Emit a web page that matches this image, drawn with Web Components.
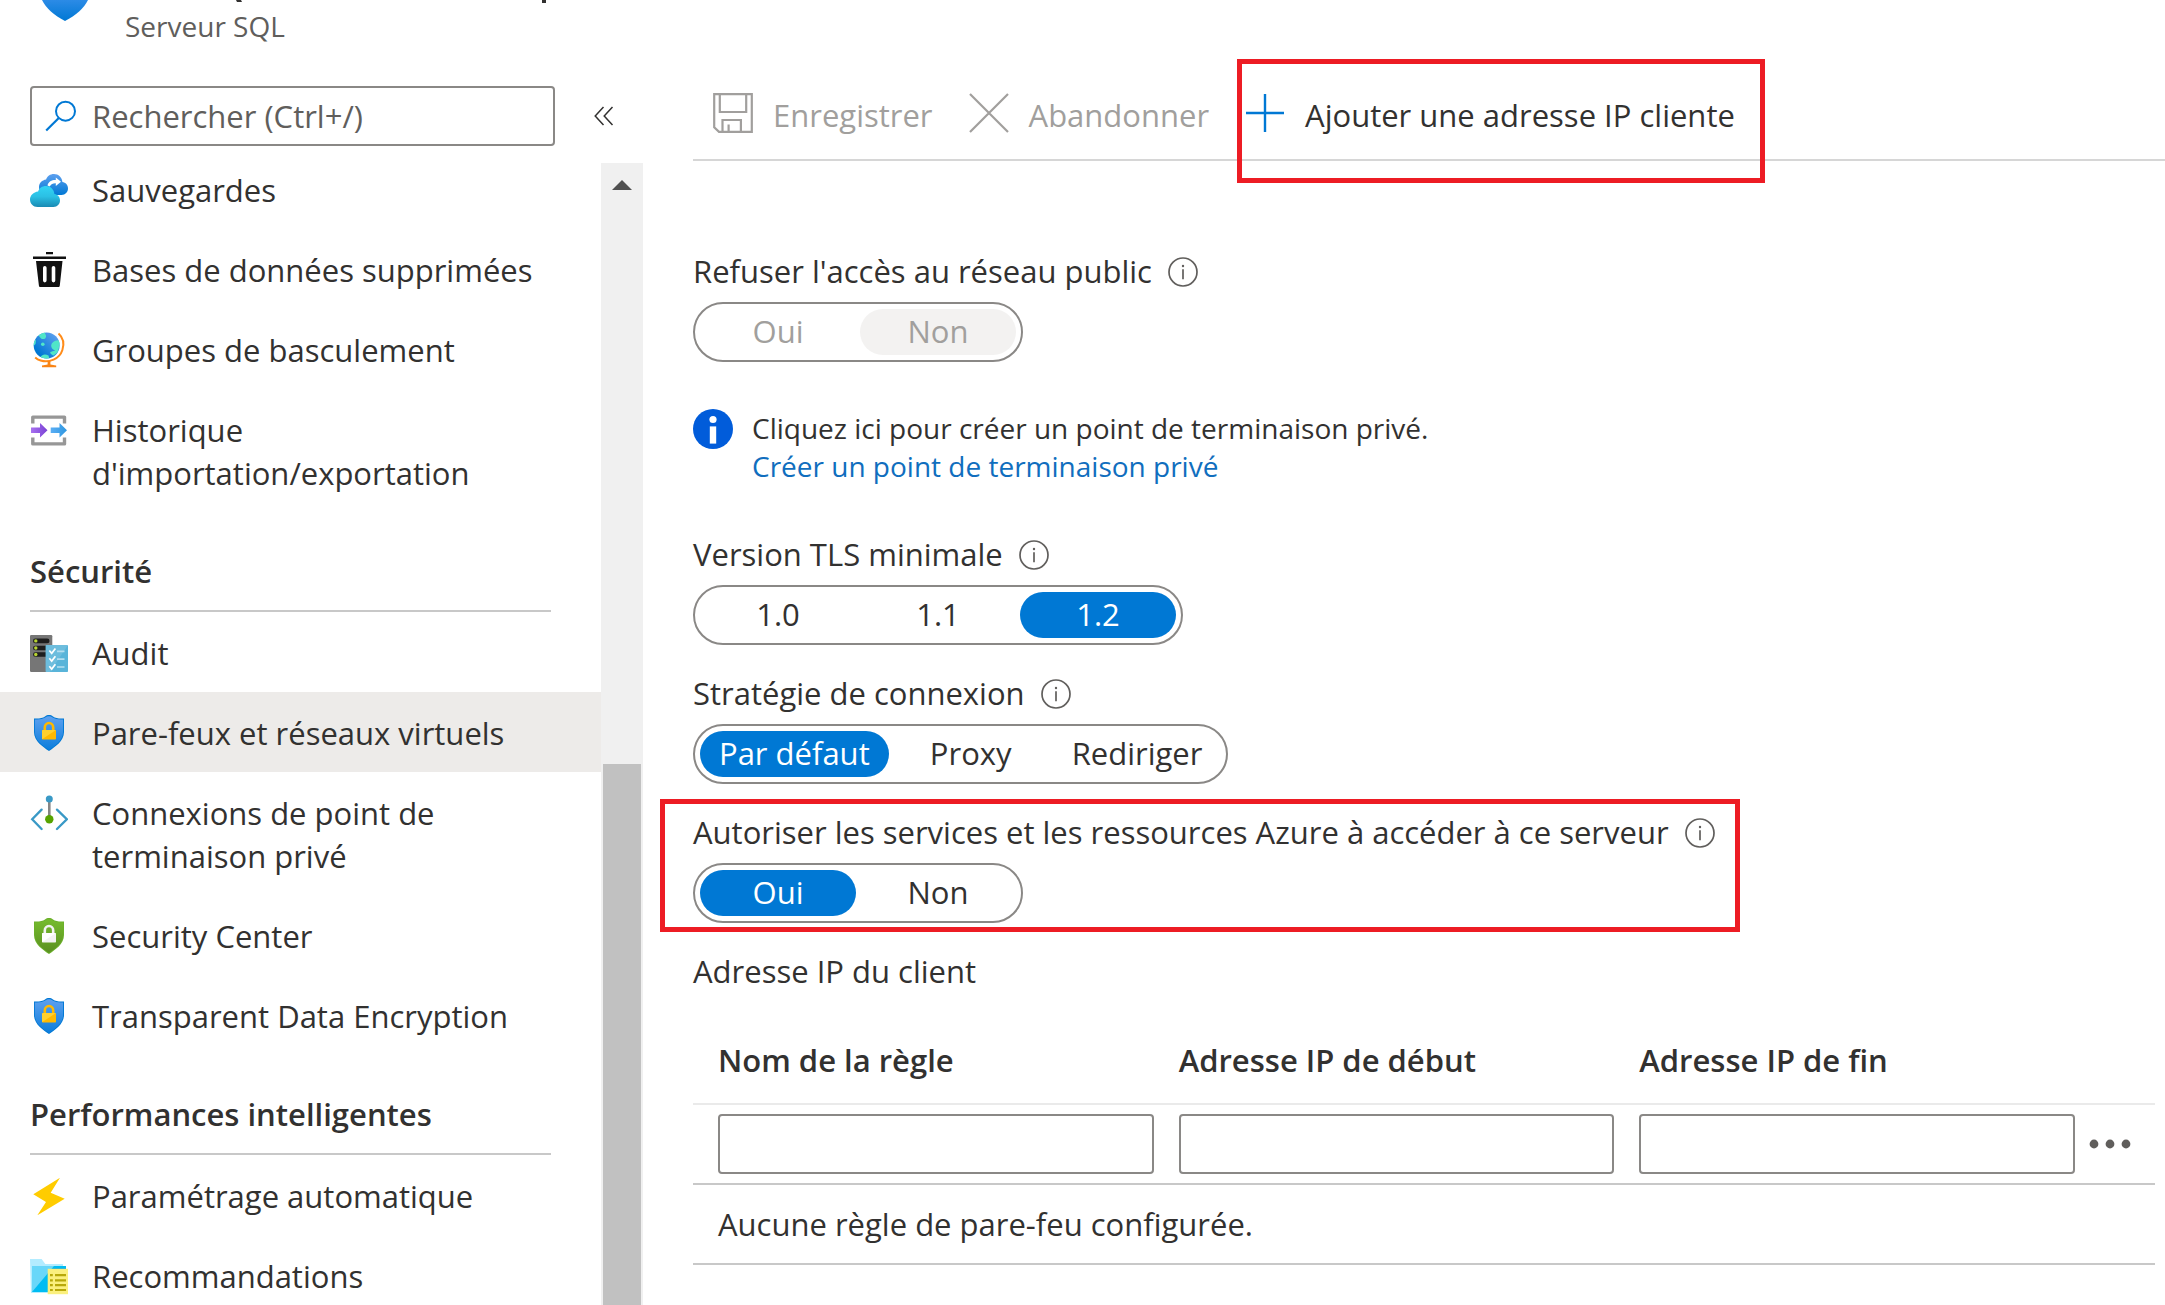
<!DOCTYPE html>
<html lang="fr">
<head>
<meta charset="utf-8">
<title>Pare-feux et réseaux virtuels</title>
<style>
  html, body { margin: 0; height: 100%; overflow: hidden; background: #fff; }
  body {
    font-family: "Open Sans", "Noto Sans", sans-serif;
    font-size: 31px;
    line-height: 43px;
    color: #323130;
  }
</style>
</head>
<body>
<sql-portal></sql-portal>

<script>
const SHIELD = 'M19 1c1.600 0 2.600.4 4 1.500C25.500 4.200 29 4.800 34 4.500V18c0 9-9 15-15 19C13 33 4 27 4 18V4.500c5 .3 8.500-.3 11-2C16.400 1.400 17.400 1 19 1z';
const shield = (id, top, bottom, edge, lock, lock2) => `
  <defs><linearGradient id="${id}" x1="0" y1="0" x2="0" y2="1"><stop offset="0" stop-color="${top}"/><stop offset="1" stop-color="${bottom}"/></linearGradient></defs>
  <path d="${SHIELD}" fill="${edge}"/>
  <path d="${SHIELD}" fill="url(#${id})" transform="translate(1.100 1.200) scale(.94)"/>
  <path d="M14.800 17v-3.500a4.200 4.500 0 0 1 8.400 0V17" fill="none" stroke="${lock}" stroke-width="2.600"/>
  <rect x="12" y="16" width="14" height="9.500" rx=".8" fill="${lock}"/>
  <path d="M12 25.200V16.500l.5-.5H26z" fill="${lock2}"/>`;

const ICONS = {
  backup: ['0 0 38 38', `
    <defs>
      <linearGradient id="b1" x1="0" y1="0" x2="0" y2="1"><stop offset="0" stop-color="#5ea0ef"/><stop offset="1" stop-color="#0078d4"/></linearGradient>
      <linearGradient id="b2" x1="0" y1="0" x2="0" y2="1"><stop offset="0" stop-color="#32d4f5"/><stop offset=".5" stop-color="#2bc0e4"/><stop offset="1" stop-color="#198ab3"/></linearGradient>
    </defs>
    <path d="M38 17.500c0-3.400-2.400-5.900-5.600-6.400C32 6.200 28.500 3 24 3c-4 0-6.800 2.200-7.900 5.400C12 9 9 12 9 16c0 4.600 3.300 8 7.500 8H31.500c3.800 0 6.500-3 6.500-6.500z" fill="url(#b1)"/>
    <path d="M17.500 14.500c1-4 4.500-5.600 8.300-5.400V6.400L31 10.700l-5.200 4.300v-2.800c-2.500-.1-4.800.3-6 3.300z" fill="#fff"/>
    <path d="M30 29.500c0-3.400-2.400-6-5.600-6.400C24 18.200 20.500 15 16 15c-4 0-6.800 2.200-7.900 5.400C3.500 21 0 24.300 0 28.500 0 32.800 3.300 36 7.500 36h16c3.800 0 6.500-3 6.500-6.500z" fill="url(#b2)"/>`],
  trash: ['0 0 38 38', `
    <path d="M16 1h7v2.200h-7zM3 5.600h33V8H3z" fill="#111"/>
    <path d="M6 10h26.500l-2.700 24.500c-.1 1-.7 1.500-1.600 1.500H10.500c-.9 0-1.500-.5-1.600-1.500z" fill="#111"/>
    <path d="M14.800 16.800v12.800M23.500 16.800v12.800" stroke="#fff" stroke-width="3.600" stroke-linecap="round"/>`],
  globe: ['0 0 38 38', `
    <defs><linearGradient id="g1" x1="1" y1="0" x2="0" y2="1"><stop offset=".1" stop-color="#5ea0ef"/><stop offset=".8" stop-color="#0078d4"/></linearGradient>
    <clipPath id="gc"><circle cx="16.700" cy="14.500" r="13"/></clipPath></defs>
    <circle cx="16.700" cy="14.500" r="13" fill="url(#g1)"/>
    <g clip-path="url(#gc)" fill="#50e6c8">
      <path d="M8 3.500L14 0l2 4.500c.4 2.500-1.600 4-3.600 3.500-1.700-.2-2-1.500-2.700-2z"/>
      <circle cx="12.800" cy="13.200" r="1.800"/>
      <path d="M3 10l3-1-.5 4L3 15.500z"/>
      <path d="M31 9.500c-4-.6-7 .3-9.200 3-1.700 3 .2 6.500 3.500 7-2 .7-3.800 1-5 1.500-.4 2 1.800 2.700 3.200 3.500l4-3z"/>
      <path d="M10.500 26c1.500-2.500 4.500-3.200 8-1.500l1 3.500h-8z"/>
    </g>
    <path d="M28.500 2.500C33 6.500 34.300 13 32.400 19 29.500 28.200 19 32 10.600 29.500 8.500 28.900 6.700 27.900 5.200 26.500" fill="none" stroke="#ff8c1a" stroke-width="2"/>
    <path d="M17.600 30h2.800v3.600c2 .2 3.400.7 5.800.9v1.700H12v-1.700c2.400-.2 3.600-.7 5.600-.9z" fill="#f98414"/>`],
  transfer: ['0 0 38 38', `
    <defs>
      <linearGradient id="t1"><stop offset="0" stop-color="#a770f0"/><stop offset="1" stop-color="#7a42d4"/></linearGradient>
      <linearGradient id="t2"><stop offset="0" stop-color="#5aaef5"/><stop offset="1" stop-color="#2f97e0"/></linearGradient>
    </defs>
    <path d="M2.800 12.500V6.100H34.500v6.400M2.800 26.500v6.400H34.500v-6.400" fill="none" stroke="#979797" stroke-width="3.400" stroke-linejoin="round"/>
    <path d="M1 16.500h9V12l7.500 7.300L10 26.500v-4.400H1z" fill="url(#t1)"/>
    <path d="M20.700 16.500h8.800V12l7.500 7.300-7.500 7.200v-4.400h-8.800z" fill="url(#t2)"/>`],
  audit: ['0 0 38 38', `
    <rect x="0" y="1" width="22.300" height="37" rx="1.200" fill="#767676"/>
    <g fill="#1e1e1e"><rect x="3" y="4.600" width="16.500" height="4.600" rx="2.300"/><rect x="3" y="11.700" width="16.500" height="4.600" rx="2.300"/><rect x="3" y="18.200" width="16.500" height="4.600" rx="2.300"/></g>
    <g fill="#b8d432"><circle cx="5.800" cy="6.900" r="1.700"/><circle cx="5.800" cy="14" r="1.700"/><circle cx="5.800" cy="20.500" r="1.700"/></g>
    <rect x="15.600" y="11" width="22.400" height="27" rx=".8" fill="#59b4d9"/>
    <path d="M15.600 11H38L20 38h-4.400z" fill="#fff" opacity=".12"/>
    <path d="M19.300 16.500l2.400 2.800 3.700-4.800M19.300 24.300l2.400 2.800 3.700-4.800M19.300 32.300l2.400 2.800 3.700-4.800" fill="none" stroke="#fff" stroke-width="1.700"/>
    <path d="M27 17.300h7.500M27 25.100h7.500M27 33h7.500" stroke="#b5def0" stroke-width="1.700"/>`],
  firewall: ['0 0 38 38', shield('s1', '#5ea0ef', '#0b7ddb', '#0078d4', '#ffb900', '#ffd02e')],
  endpoint: ['0 0 38 38', `
    <path d="M19.300 7v16" stroke="#858585" stroke-width="2.600"/>
    <circle cx="19.300" cy="5" r="3.500" fill="#3999c6"/><circle cx="19.300" cy="25.300" r="4.200" fill="#57a300"/>
    <path d="M11.600 15.600L2.200 25.300l9.400 9.700M27 15.600l9.800 9.700L27 35" fill="none" stroke="#3999c6" stroke-width="2.300" stroke-linecap="round"/>`],
  security: ['0 0 38 38', shield('s2', '#76bc2d', '#5a8f22', '#6bb02a', '#f2f2f2', '#fff')],
  bolt: ['0 0 38 38', `<path d="M30 .7l-9.300 15 14 6L7.300 38.300 16 25 3.300 17.300z" fill="#fc0"/>`],
  folder: ['0 0 38 38', `
    <path d="M0 2h11.600l3.700 5H33v29H1z" fill="#b3ecff"/>
    <path d="M2 9h34v26H2z" fill="#69d7f9"/>
    <path d="M2 35L24 9h12v26z" fill="#00bcf2"/><path d="M17.500 17l6.500-6h12v1z" fill="#0fa8e0"/>
    <rect x="17.700" y="11.800" width="20.300" height="25.400" fill="#fbf07e"/>
    <g fill="#b8a90a"><path d="M20 17h2.800v2.200H20zM20 22.200h2.800v2.200H20zM20 27h2.800v2.200H20zM20 31.900h2.800v2.200H20zM25 17h11v2.200H25zM25 22.200h11v2.200H25zM25 27h11v2.200H25zM25 31.900h11v2.200H25z"/></g>`],
  search: ['0 0 32 32', `<circle cx="20.500" cy="11.200" r="9.500" fill="none" stroke="currentColor" stroke-width="2"/><path d="M13.800 18L1.200 30.500" stroke="currentColor" stroke-width="2.200"/>`],
  collapse: ['0 0 20 20', `<path d="M9.500 1L1.200 10l8.300 9M18.500 1l-8.300 9 8.300 9" fill="none" stroke="currentColor" stroke-width="1.500"/>`],
  save: ['0 0 40 40', `
    <g fill="none" stroke="currentColor" stroke-width="2.200"><path d="M1.200 1.200h37.600v37.600H6l-4.800-4.600z"/><path d="M6.800 1.500V19h26.400V1.500"/><path d="M9.500 38.500V27h18.400v11.500M15.600 31.500v7"/></g>`],
  discard: ['0 0 40 40', `<path d="M1 1l38 38M39 1L1 39" stroke="currentColor" stroke-width="2.200"/>`],
  add: ['0 0 40 40', `<path d="M20 1v38M1 20h38" stroke="currentColor" stroke-width="2.400"/>`],
  info: ['0 0 30 30', `<circle cx="15" cy="15" r="14" fill="none" stroke="currentColor" stroke-width="1.700"/><path d="M15 12.200v10" stroke="currentColor" stroke-width="1.700"/><circle cx="15" cy="9" r="1.200" fill="currentColor"/>`],
  notice: ['0 0 40 40', `<circle cx="20" cy="20" r="20" fill="#015cda"/><circle cx="20" cy="10.500" r="3.600" fill="#fff"/><path d="M16.800 17.400h6.400v17.200h-6.400z" fill="#fff"/>`],
  more: ['0 0 42 10', `<g fill="currentColor"><circle cx="5" cy="5" r="4.400"/><circle cx="21" cy="5" r="4.400"/><circle cx="37" cy="5" r="4.400"/></g>`],
  up: ['0 0 20 10', `<path d="M0 10L10 0l10 10z" fill="currentColor"/>`],
  server: ['0 0 46 21', `
    <defs><linearGradient id="h1" x1="0" y1="0" x2="0" y2="1"><stop offset="0" stop-color="#2c8be6"/><stop offset="1" stop-color="#0078d4"/></linearGradient></defs>
    <path d="M0 0h46c-4 8-12 15.500-23 21C12 15.500 4 8 0 0z" fill="url(#h1)"/>`],
  heading: ['0 0 312 4', `<path d="M1 0h5l1 2H2zM307 0h4v3h-4z" fill="#323130"/>`]
};

function define(name, html, setup) {
  const template = document.createElement('template');
  template.innerHTML = html;
  customElements.define(name, class extends HTMLElement {
    constructor() {
      super();
      this.attachShadow({ mode: 'open' }).append(template.content.cloneNode(true));
    }
    connectedCallback() {
      if (setup && !this.ready) { this.ready = true; setup(this, this.shadowRoot); }
    }
  });
}

function iconFor(el) {
  const icon = document.createElement('az-icon');
  icon.setAttribute('name', el.getAttribute('icon'));
  return icon;
}

define('az-icon', `
  <style>:host{display:block;flex:none;width:38px;height:38px} svg{display:block;width:100%;height:100%}</style>
  <svg aria-hidden="true"></svg>`, (el, root) => {
  const [box, body] = ICONS[el.getAttribute('name')];
  const svg = root.querySelector('svg');
  svg.setAttribute('viewBox', box);
  svg.innerHTML = body;
});

/* Red frame drawn over whatever it wraps; --frame sets how far it reaches out. */
define('az-callout', `
  <style>
    :host{display:block;position:relative;width:fit-content}
    i{position:absolute;inset:var(--frame);border:5px solid #ed1c24;pointer-events:none}
  </style>
  <slot></slot><i></i>`);

define('az-nav-item', `
  <style>
    :host{display:block}
    a{display:flex;gap:24px;padding:20px 40px 17px 30px;color:inherit;text-decoration:none}
    a[aria-current]{background:#edebe9}
    az-icon{margin-top:2px}
  </style>
  <a href="#"><span><slot></slot></span></a>`, (el, root) => {
  const link = root.querySelector('a');
  link.prepend(iconFor(el));
  if (el.hasAttribute('active')) link.setAttribute('aria-current', 'page');
});

define('az-nav-section', `
  <style>
    :host{display:block}
    h2{margin:0 50px 0 30px;padding:38px 0 17px;border-bottom:2px solid #c8c8c8;font-size:inherit;font-weight:600}
  </style>
  <h2><slot name="title"></slot></h2><slot></slot>`);

define('az-scrollbar', `
  <style>
    :host{display:flex;flex-direction:column;flex:none;width:42px;background:#f0f0f0;color:#505050}
    az-icon{width:20px;height:10px;margin:17px auto 0}
    div{flex:1;margin:574px 2px 0;background:#c1c1c1}
  </style>
  <az-icon name="up"></az-icon><div></div>`);

define('az-sidebar', `
  <style>
    :host{display:flex;flex-direction:column;flex:none;width:643px;height:100%}
    header{display:flex;height:86px;padding-left:42px;gap:37px;box-sizing:border-box}
    header az-icon{width:46px;height:21px}
    header div{display:flex;flex-direction:column;gap:3px}
    header div az-icon{width:312px;height:4px;margin-left:110px}
    p{margin:0;font-size:28px;line-height:38px;color:#605e5c}
    form{display:flex;align-items:center;gap:39px;padding-left:30px}
    label{display:flex;align-items:center;gap:15px;width:525px;height:60px;padding:0 13px;box-sizing:border-box;border:2px solid #8a8886;border-radius:4px;color:#0078d4}
    label az-icon{width:32px;height:32px}
    input{flex:1;min-width:0;border:0;padding:0;outline:0;font:inherit;background:none}
    input::placeholder{color:#605e5c;opacity:1}
    button{border:0;padding:0;background:none;color:#323130}
    button az-icon{width:20px;height:20px}
    .body{display:flex;flex:1;min-height:0;margin-top:3px}
    nav{flex:1;min-width:0;overflow:hidden}
    az-scrollbar{margin-top:14px}
  </style>
  <header>
    <az-icon name="server"></az-icon>
    <div><az-icon name="heading"></az-icon><p>Serveur SQL</p></div>
  </header>
  <form>
    <label><az-icon name="search"></az-icon><input type="text" aria-label="Rechercher" placeholder="Rechercher (Ctrl+/)"></label>
    <button type="button" aria-label="Réduire le menu"><az-icon name="collapse"></az-icon></button>
  </form>
  <div class="body">
    <nav><slot></slot></nav>
    <az-scrollbar></az-scrollbar>
  </div>`);

define('az-command', `
  <style>
    :host{display:block}
    button{display:flex;align-items:flex-start;gap:20px;border:0;padding:0;background:none;font:inherit;color:#323130}
    button:disabled{color:#a19f9d}
    az-icon{width:40px;height:40px}
    button:enabled az-icon{color:#0078d4}
    span{padding-top:1px}
  </style>
  <button type="button"><span><slot></slot></span></button>`, (el, root) => {
  const button = root.querySelector('button');
  button.prepend(iconFor(el));
  button.disabled = el.hasAttribute('disabled');
});

define('az-toolbar', `
  <style>
    :host{display:flex;align-items:flex-start;gap:36px;height:66px;padding:93px 0 0 20px;border-bottom:2px solid #d6d6d6}
  </style>
  <slot></slot>`);

define('az-choice', `
  <style>
    :host{display:block;width:fit-content}
    fieldset{margin:0;border:0;padding:0;min-width:0}
    legend{display:flex;align-items:center;gap:16px;padding:0;margin-bottom:9px}
    legend az-icon{width:30px;height:30px;color:#605e5c}
    div{display:flex;gap:4px;width:fit-content;padding:5px;border:2px solid #8a8886;border-radius:30px}
    label{position:relative;min-width:156px;height:46px;padding:0 19px;box-sizing:border-box;border-radius:23px;line-height:44px;text-align:center}
    input{position:absolute;inset:0;margin:0;opacity:0}
    label:has(:checked){background:#0078d4;color:#fff}
    fieldset:disabled label{color:#a19f9d}
    fieldset:disabled label:has(:checked){background:#f3f2f1}
  </style>
  <fieldset>
    <legend><slot></slot><az-icon name="info"></az-icon></legend>
    <div></div>
  </fieldset>`, (el, root) => {
  const set = root.querySelector('fieldset');
  set.disabled = el.hasAttribute('disabled');
  for (const text of el.getAttribute('options').split('|')) {
    const label = document.createElement('label');
    const input = document.createElement('input');
    input.type = 'radio';
    input.name = 'choice';
    input.checked = text === el.getAttribute('value');
    label.append(input, text);
    root.querySelector('div').append(label);
  }
});

define('az-notice', `
  <style>
    :host{display:flex;gap:19px;font-size:28px;line-height:38px}
    az-icon{width:40px;height:40px}
    ::slotted(p){margin:0}
    ::slotted(a){color:#106ebe;text-decoration:none}
  </style>
  <az-icon name="notice"></az-icon>
  <div><slot></slot></div>`);

define('az-rules', `
  <style>
    :host{display:block}
    table{width:100%;table-layout:fixed;border-collapse:separate;border-spacing:0}
    th,td{padding:0 0 0 25px;text-align:left;font-weight:400;box-sizing:border-box}
    thead th{height:79px;padding-bottom:9px;border-bottom:2px solid #eaeaea;font-weight:600}
    .more{width:80px;padding-left:14px}
    tbody td{height:80px;border-bottom:2px solid #c8c8c8}
    input{display:block;width:100%;height:60px;box-sizing:border-box;border:2px solid #8a8886;border-radius:4px;padding:0 14px;font:inherit;background:#fff}
    button{display:block;border:0;padding:0;background:none;color:#605e5c}
    button az-icon{width:42px;height:10px}
  </style>
  <table>
    <thead><tr><th id="n">Nom de la règle</th><th id="d">Adresse IP de début</th><th id="f">Adresse IP de fin</th><th class="more"></th></tr></thead>
    <tbody>
      <tr>
        <td><input type="text" aria-labelledby="n"></td>
        <td><input type="text" aria-labelledby="d"></td>
        <td><input type="text" aria-labelledby="f"></td>
        <td class="more"><button type="button" aria-label="Plus d'options"><az-icon name="more"></az-icon></button></td>
      </tr>
      <tr><td colspan="4">Aucune règle de pare-feu configurée.</td></tr>
    </tbody>
  </table>`);

define('sql-portal', `
  <style>
    :host{display:flex;height:100vh;overflow:hidden}
    main{flex:1;min-width:0;padding-left:50px}
    .form{display:flex;flex-direction:column;gap:27px;padding:89px 10px 0 0}
    .add{--frame:-34px -30px -46px -8px}
    .allow{--frame:-12px -25px -9px -33px}
    az-notice{margin:20px 0 21px}
    p{margin:0}
    az-rules{margin-top:6px}
  </style>
  <az-sidebar>
    <az-nav-item icon="backup">Sauvegardes</az-nav-item>
    <az-nav-item icon="trash">Bases de données supprimées</az-nav-item>
    <az-nav-item icon="globe">Groupes de basculement</az-nav-item>
    <az-nav-item icon="transfer">Historique d'importation/exportation</az-nav-item>
    <az-nav-section>
      <span slot="title">Sécurité</span>
      <az-nav-item icon="audit">Audit</az-nav-item>
      <az-nav-item icon="firewall" active>Pare-feux et réseaux virtuels</az-nav-item>
      <az-nav-item icon="endpoint">Connexions de point de terminaison privé</az-nav-item>
      <az-nav-item icon="security">Security Center</az-nav-item>
      <az-nav-item icon="firewall">Transparent Data Encryption</az-nav-item>
    </az-nav-section>
    <az-nav-section>
      <span slot="title">Performances intelligentes</span>
      <az-nav-item icon="bolt">Paramétrage automatique</az-nav-item>
      <az-nav-item icon="folder">Recommandations</az-nav-item>
    </az-nav-section>
  </az-sidebar>
  <main>
    <az-toolbar>
      <az-command icon="save" disabled>Enregistrer</az-command>
      <az-command icon="discard" disabled>Abandonner</az-command>
      <az-callout class="add"><az-command icon="add">Ajouter une adresse IP cliente</az-command></az-callout>
    </az-toolbar>
    <div class="form">
      <az-choice options="Oui|Non" value="Non" disabled>Refuser l'accès au réseau public</az-choice>
      <az-notice>
        <p>Cliquez ici pour créer un point de terminaison privé.</p>
        <a href="#">Créer un point de terminaison privé</a>
      </az-notice>
      <az-choice options="1.0|1.1|1.2" value="1.2">Version TLS minimale</az-choice>
      <az-choice options="Par défaut|Proxy|Rediriger" value="Par défaut">Stratégie de connexion</az-choice>
      <az-callout class="allow"><az-choice options="Oui|Non" value="Oui">Autoriser les services et les ressources Azure à accéder à ce serveur</az-choice></az-callout>
      <p>Adresse IP du client</p>
      <az-rules></az-rules>
    </div>
  </main>`);
</script>
</body>
</html>
